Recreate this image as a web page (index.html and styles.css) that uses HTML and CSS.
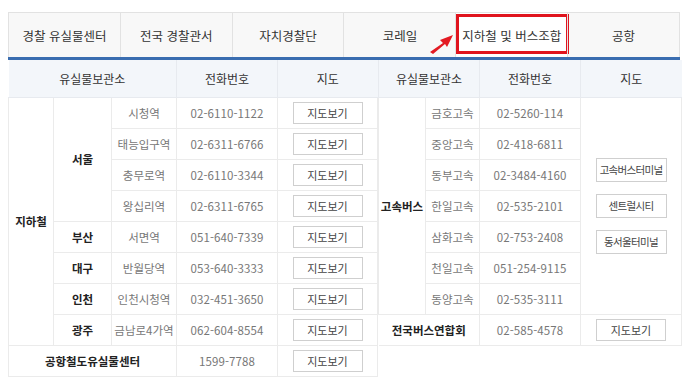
FILE: index.html
```html
<!DOCTYPE html>
<html lang="ko">
<head>
<meta charset="utf-8">
<title>유실물센터</title>
<link rel="stylesheet" href="styles.css">
</head>
<body>
<div class="wrap">
  <nav class="tabs">
    <div class="tab">경찰 유실물센터</div>
    <div class="tab">전국 경찰관서</div>
    <div class="tab">자치경찰단</div>
    <div class="tab">코레일</div>
    <div class="tab tab-active">지하철 및 버스조합
      <span class="highlight"></span>
      <svg class="arrow" width="26" height="20" viewBox="0 0 26 20"><path d="M1 18 L14 9 L11 6 L24 1 L18 13 L16 10 L4 20 Z" fill="#e31b23"/></svg>
    </div>
    <div class="tab">공항</div>
  </nav>
  <div class="tables">
    <table class="tbl tbl-left">
      <colgroup><col style="width:45px"><col style="width:58px"><col style="width:65px"><col style="width:101px"><col style="width:100px"></colgroup>
      <thead>
        <tr><th colspan="3">유실물보관소</th><th>전화번호</th><th>지도</th></tr>
      </thead>
      <tbody>
        <tr><td rowspan="8" class="b">지하철</td><td rowspan="4" class="b">서울</td><td>시청역</td><td class="num">02-6110-1122</td><td><span class="btn">지도보기</span></td></tr>
        <tr><td>태능입구역</td><td class="num">02-6311-6766</td><td><span class="btn">지도보기</span></td></tr>
        <tr><td>충무로역</td><td class="num">02-6110-3344</td><td><span class="btn">지도보기</span></td></tr>
        <tr><td>왕십리역</td><td class="num">02-6311-6765</td><td><span class="btn">지도보기</span></td></tr>
        <tr><td class="b">부산</td><td>서면역</td><td class="num">051-640-7339</td><td><span class="btn">지도보기</span></td></tr>
        <tr><td class="b">대구</td><td>반월당역</td><td class="num">053-640-3333</td><td><span class="btn">지도보기</span></td></tr>
        <tr><td class="b">인천</td><td>인천시청역</td><td class="num">032-451-3650</td><td><span class="btn">지도보기</span></td></tr>
        <tr><td class="b">광주</td><td>금남로4가역</td><td class="num">062-604-8554</td><td><span class="btn">지도보기</span></td></tr>
        <tr><td colspan="3" class="b">공항철도유실물센터</td><td class="num">1599-7788</td><td><span class="btn">지도보기</span></td></tr>
      </tbody>
    </table>
    <table class="tbl tbl-right">
      <colgroup><col style="width:47px"><col style="width:54px"><col style="width:101px"><col style="width:101px"></colgroup>
      <thead>
        <tr><th colspan="2">유실물보관소</th><th>전화번호</th><th>지도</th></tr>
      </thead>
      <tbody>
        <tr><td rowspan="7" class="b">고속버스</td><td>금호고속</td><td class="num">02-5260-114</td>
          <td rowspan="7"><div class="btn-stack"><span class="btn">고속버스터미널</span><span class="btn">센트럴시티</span><span class="btn">동서울터미널</span></div></td></tr>
        <tr><td>중앙고속</td><td class="num">02-418-6811</td></tr>
        <tr><td>동부고속</td><td class="num">02-3484-4160</td></tr>
        <tr><td>한일고속</td><td class="num">02-535-2101</td></tr>
        <tr><td>삼화고속</td><td class="num">02-753-2408</td></tr>
        <tr><td>천일고속</td><td class="num">051-254-9115</td></tr>
        <tr><td>동양고속</td><td class="num">02-535-3111</td></tr>
        <tr><td colspan="2" class="b">전국버스연합회</td><td class="num">02-585-4578</td><td><span class="btn">지도보기</span></td></tr>
      </tbody>
    </table>
  </div>
</div>
</body>
</html>
```
FILE: styles.css
```css
* { box-sizing: border-box; }
html, body { margin: 0; background: #fff; }
body {
  font-family: "Noto Sans CJK KR", "Noto Sans", sans-serif;
  color: #333;
}
.wrap {
  padding: 12px 0 0 8px;
  width: 680px;
}
.tabs {
  display: flex;
  height: 48px;
  border-top: 1px solid #e2e2e2;
  border-bottom: 3px solid #3a6db0;
  background: #f8f8f8;
}
.tab {
  position: relative;
  flex: 1 1 0;
  display: flex;
  align-items: center;
  justify-content: center;
  font-size: 12.5px;
  color: #333;
  border-left: 1px solid #e2e2e2;
  padding-top: 1px;
}
.tab:last-child { border-right: 1px solid #e2e2e2; }
.tab-active { background: #fff; }
.highlight {
  position: absolute;
  left: 0;
  top: 1px;
  width: 113px;
  height: 40px;
  border: 3px solid #e0141e;
}
.arrow {
  position: absolute;
  left: -27px;
  top: 21px;
}
.tables {
  display: flex;
  align-items: flex-start;
}
.tbl {
  border-collapse: collapse;
  table-layout: fixed;
  font-size: 11.5px;
}
.tbl-left { width: 369px; }
.tbl-right { width: 303px; }
.tbl th {
  height: 37px;
  background: #f3f6fa;
  font-weight: normal;
  color: #333;
  font-size: 12px;
  border-left: 1px solid #e7eaef;
  border-bottom: 1px solid #e7eaef;
  padding: 0;
}
.tbl-left th:first-child { border-left: none; }
.tbl td {
  height: 31px;
  padding: 0;
  text-align: center;
  color: #777;
  border: 1px solid #ebebeb;
}
.tbl-right td:first-child { border-left: none; }
.tbl-right tr:first-child td:first-child { border-left: 1px solid #ebebeb; }
.tbl td.b { color: #222; font-weight: bold; }
.tbl td.num { letter-spacing: 0.1px; }
.btn {
  display: inline-block;
  width: 70px;
  height: 22px;
  line-height: 20px;
  border: 1px solid #cfcfcf;
  background: #fff;
  color: #444;
  font-size: 11px;
  white-space: nowrap;
  vertical-align: middle;
}
.btn-stack {
  display: flex;
  flex-direction: column;
  align-items: center;
  gap: 12px;
}
.btn-stack .btn {
  width: 71px;
  height: 24px;
  line-height: 22px;
  letter-spacing: -0.7px;
  font-size: 10.5px;
}
```
